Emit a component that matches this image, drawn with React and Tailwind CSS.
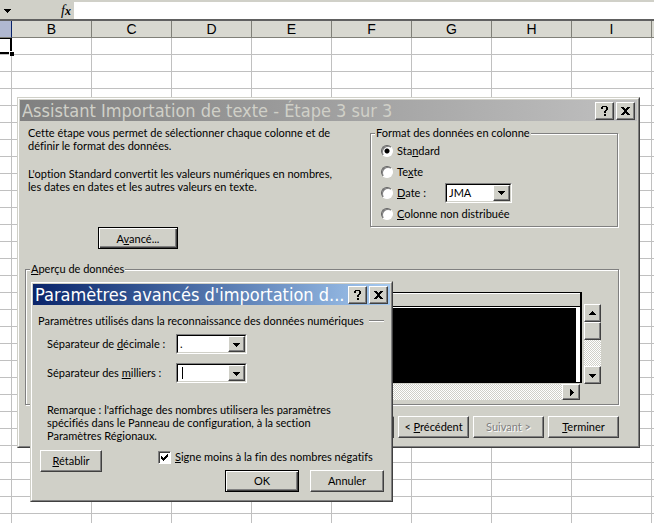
import { useState } from 'react';

const COLUMNS = ['B', 'C', 'D', 'E', 'F', 'G', 'H', 'I'];
const ROWS = Array.from({ length: 29 }, (_, i) => i + 1);

const RAISED =
  'border border-t-white border-l-white border-r-[#404040] border-b-[#404040] shadow-[inset_-1px_-1px_0_#808080] bg-[#d0d0c8]';
const GROUP =
  'border border-[#808080] shadow-[1px_1px_0_#fff,inset_1px_1px_0_#fff]';
const TRACK =
  'bg-[repeating-conic-gradient(#fff_0_25%,#d0d0c8_0_50%)] bg-size-[2px_2px]';

function Arrow({ dir = 'down' }) {
  const paths = {
    down: 'M0 2h7v1h-1v1h-1v1h-1v1h-1v-1h-1v-1h-1v-1h-1z',
    up: 'M3 1h1v1h1v1h1v1h1v1h-7v-1h1v-1h1v-1h1z',
    right: 'M2 0h1v1h1v1h1v1h1v1h-1v1h-1v1h-1v1h-1z',
  };
  return (
    <svg viewBox="0 0 7 7" className="w-[7px] h-[7px]" shapeRendering="crispEdges" aria-hidden="true">
      <path d={paths[dir]} fill="#000" />
    </svg>
  );
}

function Button({ children, className = 'w-[71px]', isDefault, disabled }) {
  return (
    <button
      disabled={disabled}
      className={`h-[22px] shrink-0 whitespace-nowrap ${className} ${
        isDefault
          ? 'border border-black bg-[#d0d0c8] shadow-[inset_1px_1px_0_#fff,inset_-1px_-1px_0_#404040,inset_-2px_-2px_0_#808080]'
          : RAISED
      } ${disabled ? 'text-[#808080] [text-shadow:1px_1px_0_#fff]' : ''}`}
    >
      {children}
    </button>
  );
}

function TitleBar({ title, className }) {
  return (
    <div className={`flex items-center h-[21px] pl-0.5 pr-0.5 bg-linear-to-r ${className}`}>
      <h2 className="flex-1 min-w-0 overflow-hidden whitespace-nowrap text-[18px] leading-[21px] font-['DejaVu_Sans_Condensed','DejaVu_Sans',sans-serif]">
        {title}
      </h2>
      <button aria-label="Aide" className={`w-[19px] h-[18px] grid place-items-center mr-0.5 ${RAISED}`}>
        <svg viewBox="0 0 7 10" className="w-[7px] h-2.5" shapeRendering="crispEdges">
          <path d="M1 0h5v1h-5zM0 1h2v2h-2zM5 1h2v3h-2zM4 4h2v1h-2zM3 5h2v2h-2zM3 8h2v2h-2z" fill="#000" />
        </svg>
      </button>
      <button aria-label="Fermer" className={`w-[19px] h-[18px] grid place-items-center ${RAISED}`}>
        <svg viewBox="0 0 9 8" className="w-[9px] h-2" shapeRendering="crispEdges">
          <path
            d="M0 0h3v1h-3zM6 0h3v1h-3zM1 1h3v1h-3zM5 1h3v1h-3zM2 2h5v1h-5zM3 3h3v2h-3zM2 5h5v1h-5zM1 6h3v1h-3zM5 6h3v1h-3zM0 7h3v1h-3zM6 7h3v1h-3z"
            fill="#000"
          />
        </svg>
      </button>
    </div>
  );
}

function Dialog({ title, className, barClassName, children }) {
  return (
    <section
      role="dialog"
      aria-label={title}
      className={`absolute bg-[#d0d0c8] border border-t-[#d0d0c8] border-l-[#d0d0c8] border-r-[#404040] border-b-[#404040] ${className}`}
    >
      <div className="p-px border border-t-white border-l-white border-r-[#808080] border-b-[#808080]">
        <TitleBar title={title} className={barClassName} />
        {children}
      </div>
    </section>
  );
}

function Combo({ id, label, options, className = 'w-[71px]', caret }) {
  const [value, setValue] = useState(options[0]);
  return (
    <div className={`border border-t-[#808080] border-l-[#808080] border-r-white border-b-white ${className}`}>
      <div className="grid border border-t-black border-l-black border-r-[#d0d0c8] border-b-[#d0d0c8] bg-white">
        <select
          id={id}
          aria-label={label}
          value={value}
          onChange={(e) => setValue(e.target.value)}
          className="col-start-1 row-start-1 w-full h-4 pl-0.5 leading-4 appearance-none bg-white outline-none"
        >
          {options.map((o) => <option key={o} value={o}>{o}</option>)}
        </select>
        {caret && <span className="col-start-1 row-start-1 self-center ml-1 w-px h-3 bg-black" />}
        <span className={`col-start-1 row-start-1 justify-self-end w-[17px] h-4 grid place-items-center pointer-events-none ${RAISED}`}>
          <Arrow />
        </span>
      </div>
    </div>
  );
}

function Radio({ value, format, onChange, children }) {
  return (
    <label className="flex items-center gap-1 h-[21px]">
      <input
        type="radio"
        name="format"
        value={value}
        checked={format === value}
        onChange={() => onChange(value)}
        className="appearance-none w-3 h-3 rounded-full bg-white border border-t-[#606060] border-l-[#606060] border-r-white border-b-white shadow-[inset_1px_1px_0_#808080] checked:bg-[radial-gradient(#000_2px,#fff_3px)]"
      />
      <span>{children}</span>
    </label>
  );
}

function Sheet() {
  return (
    <table className="table-fixed w-[732px] border-separate border-spacing-0 bg-white font-['Liberation_Sans',Arial,sans-serif]">
      <colgroup>
        <col className="w-3" />
        {COLUMNS.map((c) => <col key={c} className="w-20" />)}
        <col className="w-20" />
      </colgroup>
      <thead>
        <tr className="h-[17px] text-[14px] leading-4">
          <th className="p-0 bg-[#b0b8d0] border-r border-b border-r-[#0a246a] border-b-[#808078]" />
          {COLUMNS.map((c) => (
            <th key={c} scope="col" className="p-0 font-normal bg-[#d8d8d0] border-r border-b border-[#808078]">{c}</th>
          ))}
          <th className="p-0 bg-[#d8d8d0] border-b border-[#808078]" />
        </tr>
      </thead>
      <tbody>
        {ROWS.map((r) => (
          <tr key={r} className="h-[17px]">
            <td className="p-0 border-r border-b border-[#c0c0c0]">
              {r === 1 && (
                <div className="relative h-4 -mr-px border-2 border-l-0 border-t border-black">
                  <span className="absolute -right-1 -bottom-1 w-[5px] h-[5px] bg-black border-t border-l border-white" />
                </div>
              )}
            </td>
            {COLUMNS.map((c) => <td key={c} className="p-0 border-r border-b border-[#c0c0c0]" />)}
            <td className="p-0 border-b border-[#c0c0c0]" />
          </tr>
        ))}
      </tbody>
    </table>
  );
}

function ImportDialog() {
  const [format, setFormat] = useState('standard');
  return (
    <Dialog
      title="Assistant Importation de texte - Étape 3 sur 3"
      className="left-[17px] top-[97px] w-[623px]"
      barClassName="from-[#808080] to-[#c0c0c0] text-[#d0d0c8]"
    >
      <div className="pt-[5px] pl-[5px] pr-[18px] pb-[7px]">
        <div className="flex items-start justify-between">
          <div className="pl-[3px] leading-[13px]">
            <p>
              Cette étape vous permet de sélectionner chaque colonne et de
              <br />
              définir le format des données.
            </p>
            <p className="mt-[15px]">
              L'option Standard convertit les valeurs numériques en nombres,
              <br />
              les dates en dates et les autres valeurs en texte.
            </p>
            <Button isDefault className="w-20 mt-[34px] ml-[70px]">A<u>v</u>ancé...</Button>
          </div>
          <fieldset className={`w-[248px] mr-px pl-2.5 pb-0.5 ${GROUP}`}>
            <legend className="-ml-1.5 px-px leading-[14px] bg-[#d0d0c8]">Format des données en colonne</legend>
            <Radio value="standard" format={format} onChange={setFormat}>Sta<u>n</u>dard</Radio>
            <Radio value="texte" format={format} onChange={setFormat}>Te<u>x</u>te</Radio>
            <div className="flex items-center h-[21px]">
              <div className="w-16"><Radio value="date" format={format} onChange={setFormat}><u>D</u>ate :</Radio></div>
              <Combo label="Format de date" options={['JMA', 'MJA', 'AMJ']} className="w-[67px]" />
            </div>
            <Radio value="exclue" format={format} onChange={setFormat}><u>C</u>olonne non distribuée</Radio>
          </fieldset>
        </div>

        <fieldset className={`mt-[13px] pt-4 pl-2.5 pr-[17px] pb-1 ${GROUP}`}>
          <legend className="-ml-1.5 px-px leading-[14px] bg-[#d0d0c8]"><u>A</u>perçu de données</legend>
          <div className="flex gap-0.5">
            <div className="flex-1">
              <div className="border border-r-2 border-black">
                <div className="h-[13px] border-t border-white bg-[#d0d0c8]" />
                <div className="h-px bg-black" />
                <div className="h-[75px] border-t border-r-4 border-white bg-black" />
              </div>
              <div className={`flex justify-end mt-px mr-0.5 ${TRACK}`}>
                <button aria-label="Défiler à droite" className={`w-[18px] h-4 grid place-items-center ${RAISED}`}><Arrow dir="right" /></button>
              </div>
            </div>
            <div className={`self-start flex flex-col mt-3 h-20 w-[17px] ${TRACK}`}>
              <button aria-label="Défiler vers le haut" className={`h-[18px] grid place-items-center ${RAISED}`}><Arrow dir="up" /></button>
              <div className={`h-[18px] ${RAISED}`} />
              <button aria-label="Défiler vers le bas" className={`h-[18px] mt-auto grid place-items-center ${RAISED}`}><Arrow /></button>
            </div>
          </div>
        </fieldset>

        <div className="flex justify-end gap-1 mt-[11px]">
          <Button>Annuler</Button>
          <Button>&lt; <u>P</u>récédent</Button>
          <Button disabled>Suivant &gt;</Button>
          <Button><u>T</u>erminer</Button>
        </div>
      </div>
    </Dialog>
  );
}

function AdvancedDialog() {
  return (
    <Dialog
      title="Paramètres avancés d'importation d..."
      className="left-[30px] top-[281px] w-[363px]"
      barClassName="from-[#0a246a] to-[#a6caf0] text-white"
    >
      <div className="pt-[9px] pl-[5px] pr-1.5 pb-[7px]">
        <div className="flex items-center gap-[5px] leading-[14px]">
          <h3>Paramètres utilisés dans la reconnaissance des données numériques</h3>
          <span className="flex-1 h-0.5 border-t border-b border-t-[#808080] border-b-white" />
        </div>
        <div className="pl-[9px] mt-1.5">
          <div className="flex items-center">
            <label htmlFor="decimale" className="w-[129px]">Séparateur de <u>d</u>écimale :</label>
            <Combo id="decimale" options={['.', ',']} />
          </div>
          <div className="flex items-center mt-[9px]">
            <label htmlFor="milliers" className="w-[129px]">Séparateur des <u>m</u>illiers :</label>
            <Combo id="milliers" options={['', '.', ',']} caret />
          </div>
          <p className="mt-5 leading-[13px]">
            Remarque : l'affichage des nombres utilisera les paramètres
            <br />
            spécifiés dans le Panneau de configuration, à la section
            <br />
            Paramètres Régionaux.
          </p>
        </div>
        <div className="flex items-start mt-2 pl-0.5">
          <Button className="w-[62px]"><u>R</u>établir</Button>
          <div className="flex-1 ml-14">
            <label className="flex items-center gap-1 h-[14px]">
              <span className="grid place-items-center">
                <input
                  type="checkbox"
                  defaultChecked
                  className="peer col-start-1 row-start-1 appearance-none w-[13px] h-[13px] bg-white border border-t-[#808080] border-l-[#808080] border-r-white border-b-white shadow-[inset_1px_1px_0_#404040]"
                />
                <svg
                  viewBox="0 0 7 7"
                  className="col-start-1 row-start-1 w-[7px] h-[7px] pointer-events-none invisible peer-checked:visible"
                  shapeRendering="crispEdges"
                  aria-hidden="true"
                >
                  <path d="M0 2h1v1h1v1h1v-1h1v-1h1v-1h1v-1h1v3h-1v1h-1v1h-1v1h-1v1h-1v-1h-1v-1h-1z" />
                </svg>
              </span>
              <span><u>S</u>igne moins à la fin des nombres négatifs</span>
            </label>
            <div className="flex justify-end gap-[11px] mt-1.5">
              <Button isDefault className="w-[74px]">OK</Button>
              <Button className="w-[74px]">Annuler</Button>
            </div>
          </div>
        </div>
      </div>
    </Dialog>
  );
}

export default function App() {
  return (
    <main className="relative h-screen overflow-hidden bg-white text-black text-[11px] leading-[14px] font-[Lato,Tahoma,sans-serif] [font-variant-ligatures:none] [&_u]:underline-offset-1">
      <div className="flex items-center h-[21px] pt-0.5 bg-[#d0d0c8] border-b-2 border-b-[#606060]">
        <span className="w-[61px] pl-1"><Arrow /></span>
        <i className="w-[13px] text-[14px] font-['Liberation_Serif',serif]">f<b className="text-[12px]">x</b></i>
        <input aria-label="Barre de formule" className="flex-1 self-stretch bg-white outline-none" />
      </div>
      <Sheet />
      <ImportDialog />
      <AdvancedDialog />
    </main>
  );
}
